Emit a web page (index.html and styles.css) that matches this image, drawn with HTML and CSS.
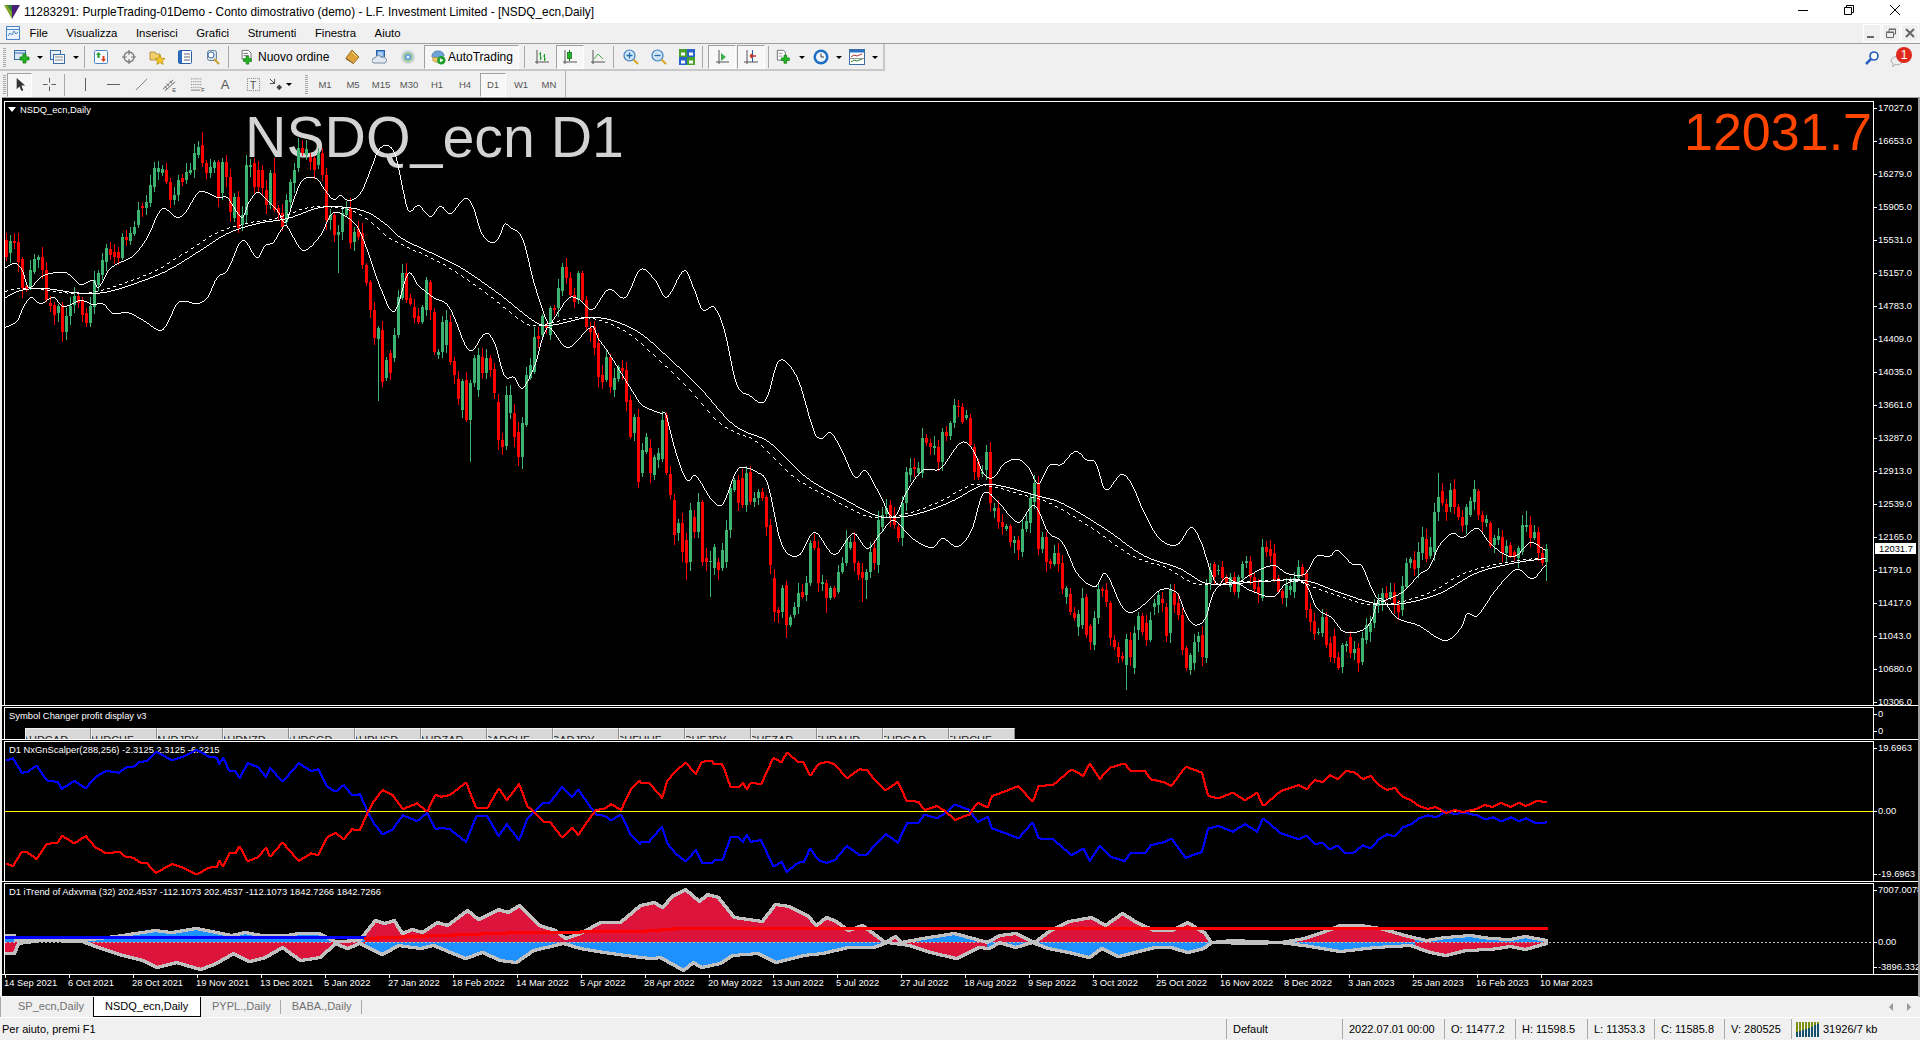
FILE: index.html
```html
<!DOCTYPE html>
<html lang="it">
<head>
  <meta charset="UTF-8" />
  <title>11283291: PurpleTrading-01Demo - Conto dimostrativo (demo) - L.F. Investment Limited - [NSDQ_ecn,Daily]</title>
  <link rel="stylesheet" href="styles.css">
</head>
<body>
  <div class="titlebar">
    <svg class="app-logo" viewBox="0 0 16 14"><polygon points="0,0 8,0 8,14" fill="#7fa52a"/><polygon points="8,0 16,0 8,14" fill="#4b1f78"/><polygon points="3,0 8,0 8,7" fill="#2f7d3a"/></svg>
    <span class="title-text">11283291: PurpleTrading-01Demo - Conto dimostrativo (demo) - L.F. Investment Limited - [NSDQ_ecn,Daily]</span>
    <div class="win-controls">
      <svg viewBox="0 0 46 23"><path d="M18 10.5h10" stroke="#000" fill="none"/></svg>
      <svg viewBox="0 0 46 23"><path d="M18.5 7.5h7v7h-7zM20.500 7.500v-2h7v7h-2" stroke="#000" fill="none"/></svg>
      <svg viewBox="0 0 46 23"><path d="M18 5l10 10M28 5L18 15" stroke="#000" fill="none"/></svg>
    </div>
  </div>

  <div class="menubar">
    <svg class="menu-icon" viewBox="0 0 16 16"><rect x="1.500" y="1.500" width="13" height="13" fill="#eaf2fb" stroke="#4a86c8"/><path d="M1.500 4.500h13" stroke="#4a86c8"/><path d="M3 11l2-3 2 2 2-4 2 3 2-2" fill="none" stroke="#4a86c8"/></svg>
    <span>File</span><span>Visualizza</span><span>Inserisci</span><span>Grafici</span><span>Strumenti</span><span>Finestra</span><span>Aiuto</span>
    <div class="mdi-controls">
      <div class="mdi-btn"><svg viewBox="0 0 16 16"><path d="M3 11h7v2H3z" fill="#666"/></svg></div>
      <div class="mdi-btn"><svg viewBox="0 0 16 16"><path d="M3.500 7.500h7v5h-7zM6 7V4.500h6.500V9H11" fill="none" stroke="#666"/><path d="M3 7h8M6 4h7" stroke="#666"/></svg></div>
      <div class="mdi-btn"><svg viewBox="0 0 16 16"><path d="M4 4l8 8M12 4l-8 8" stroke="#666" stroke-width="2"/></svg></div>
    </div>
  </div>

  <div class="toolbar tb-one">
    <div class="tb-panel">
      <div class="grip"></div>
      <div class="btn btn-drop"><svg class="ic" viewBox="0 0 18 16"><rect x="1.500" y="1.500" width="11" height="9" fill="#dbe8f6" stroke="#3a6ea5"/><path d="M1.500 4h11" stroke="#3a6ea5"/><path d="M10 5h3v3h3v3h-3v3h-3v-3H7V8h3z" fill="#23b523" stroke="#0c7c0c" stroke-width=".8"/></svg><i class="caret"></i></div>
      <div class="btn btn-drop"><svg class="ic" viewBox="0 0 18 16"><rect x="1.500" y="1.500" width="10" height="9" fill="#e6eef8" stroke="#3a6ea5"/><rect x="4.500" y="5.500" width="11" height="9" fill="#f4f8fc" stroke="#3a6ea5"/><path d="M6 8h8M6 11h8" stroke="#888"/></svg><i class="caret"></i></div>
      <div class="sep"></div>
      <div class="btn"><svg class="ic" viewBox="0 0 16 16"><rect x="1.500" y="1.500" width="13" height="13" rx="1" fill="#f6f9fd" stroke="#4a86c8"/><path d="M5.500 3l2.500 3H6.500v3h-2V6H3z" fill="#1f9e2c"/><path d="M10.500 13L8 10h1.500V7h2v3H13z" fill="#d9401f"/></svg></div>
      <div class="btn"><svg class="ic" viewBox="0 0 16 16"><circle cx="8" cy="8" r="5" fill="none" stroke="#777" stroke-width="1.300"/><path d="M8 1v5M8 10v5M1 8h5M10 8h5" stroke="#777" stroke-width="1.200"/></svg></div>
      <div class="btn"><svg class="ic" viewBox="0 0 16 16"><path d="M1 3h5l1 2h4v6H1z" fill="#f0cf6c" stroke="#a8862c" stroke-width=".8"/><path d="M11 6l1.500 3.200 3.500.4-2.600 2.300.8 3.500-3.200-1.800-3.200 1.800.8-3.500L6 9.600l3.500-.4z" fill="#f2c522" stroke="#b58a12" stroke-width=".7"/></svg></div>
      <div class="btn"><svg class="ic" viewBox="0 0 16 16"><rect x="1.500" y="1.500" width="13" height="13" rx="1" fill="#fff" stroke="#2a5fa8"/><rect x="2" y="2" width="3" height="12" fill="#2a6fc0"/><path d="M7 5h6M7 8h6M7 11h6" stroke="#667"/></svg></div>
      <div class="btn"><svg class="ic" viewBox="0 0 16 16"><rect x="2.500" y="1.500" width="9" height="10" rx="2" fill="#d6e1ec" stroke="#6c8198"/><circle cx="6" cy="6" r="3" fill="#fff" stroke="#3a6ea5"/><path d="M9 10l5 5" stroke="#c9a22a" stroke-width="2"/></svg></div>
      <div class="sep"></div>
      <div class="btn btn-text btn-order"><svg class="ic" viewBox="0 0 16 18"><path d="M2.500 1.500h7l3 3v7h-10z" fill="#fff" stroke="#666"/><path d="M4 5h5M4 7.500h6" stroke="#666"/><path d="M7 8h3v3h3v3h-3v3H7v-3H4v-3h3z" fill="#23b523" stroke="#0c7c0c" stroke-width=".8"/></svg><span>Nuovo ordine</span></div>
      <div class="btn"><svg class="ic" viewBox="0 0 16 16"><path d="M8 1l7 7-5.500 6.500L2 9z" fill="#e0a33a" stroke="#8a5f14" stroke-width=".8"/><path d="M2 9l7.500 5.500V15L1.500 10z" fill="#7a5212"/><path d="M8 3l4.500 4.500" stroke="#f7dd9a"/></svg></div>
      <div class="btn"><svg class="ic" viewBox="0 0 16 16"><rect x="4.500" y="1.500" width="8" height="8" fill="#5b9be0" stroke="#2a5fa8"/><path d="M6 4h5M6 6h5" stroke="#fff"/><path d="M2 14a2.500 2.500 0 0 1 1-5 3.500 3.500 0 0 1 6.500-.5A3 3 0 0 1 13 14z" fill="#dfe7f0" stroke="#7a8ca0"/></svg></div>
      <div class="btn"><svg class="ic" viewBox="0 0 16 16"><circle cx="8" cy="8" r="7" fill="#cdd9df"/><circle cx="8" cy="8" r="5" fill="#9fc69a"/><circle cx="8" cy="8" r="3" fill="#5b9be0"/><circle cx="8" cy="8" r="1.500" fill="#e8f0f8"/></svg></div>
      <div class="btn btn-text btn-auto"><svg class="ic" viewBox="0 0 17 17"><path d="M2 8c0-4 3-6 7-6 3 0 6 2 6 5l-2 2H3z" fill="#6fa3d8" stroke="#3a6ea5" stroke-width=".7"/><path d="M3 9h10v3c-2 3-8 3-10 0z" fill="#f2c96a" stroke="#a8862c" stroke-width=".7"/><circle cx="12" cy="12" r="4.500" fill="#1f9e2c"/><path d="M10.500 9.800l4 2.200-4 2.200z" fill="#fff"/></svg><span>AutoTrading</span></div>
      <div class="sep sep-wide"></div>
      <div class="btn"><svg class="ic" viewBox="0 0 16 16"><path d="M3 1v14M1 13h14" stroke="#555"/><path d="M6.500 3v8M5 5h1.500M6.500 9H8M10.500 5v7M9 7h1.500M10.500 10H12" stroke="#1f9e2c"/></svg></div>
      <div class="btn btn-on"><svg class="ic" viewBox="0 0 16 16"><path d="M3 1v14M1 13h14" stroke="#555"/><path d="M7.500 1v11" stroke="#156f20"/><rect x="5.500" y="3.500" width="4" height="6" fill="#23b523" stroke="#156f20" stroke-width=".8"/></svg></div>
      <div class="btn"><svg class="ic" viewBox="0 0 16 16"><path d="M3 1v14M1 13h14" stroke="#555"/><path d="M4 10l4-5 5 5" fill="none" stroke="#3fae4a"/></svg></div>
      <div class="sep sep-zoom"></div>
      <div class="btn"><svg class="ic" viewBox="0 0 16 16"><circle cx="6.500" cy="6.500" r="5.500" fill="#cfe4f7" stroke="#3a7dc0" stroke-width="1.200"/><path d="M6.500 3.500v6M3.500 6.500h6" stroke="#2a6fb0" stroke-width="1.300"/><path d="M10.500 10.500l4.500 4.500" stroke="#d6a92c" stroke-width="2.200"/></svg></div>
      <div class="btn"><svg class="ic" viewBox="0 0 16 16"><circle cx="6.500" cy="6.500" r="5.500" fill="#cfe4f7" stroke="#3a7dc0" stroke-width="1.200"/><path d="M3.500 6.500h6" stroke="#2a6fb0" stroke-width="1.300"/><path d="M10.500 10.500l4.500 4.500" stroke="#d6a92c" stroke-width="2.200"/></svg></div>
      <div class="btn"><svg class="ic" viewBox="0 0 16 16"><rect x="0" y="0" width="8" height="8" fill="#4aa02c"/><rect x="8" y="0" width="8" height="8" fill="#2a62c8"/><rect x="0" y="8" width="8" height="8" fill="#2a62c8"/><rect x="8" y="8" width="8" height="8" fill="#4aa02c"/><path d="M2 3.500h4v3H2zM10 3.500h4v3h-4zM2 11.500h4v3H2zM10 11.500h4v3h-4z" fill="#fff"/></svg></div>
      <div class="sep sep-scroll"></div>
      <div class="btn btn-on"><svg class="ic" viewBox="0 0 16 16"><path d="M5 1v14M2 13h13" stroke="#555"/><path d="M7 4l5 4-5 4z" fill="#3fae4a"/></svg></div>
      <div class="btn btn-on btn-shift"><svg class="ic" viewBox="0 0 16 16"><path d="M4 1v14M1 13h14" stroke="#555"/><path d="M9.500 1v12" stroke="#2a5fa8"/><path d="M7 7h6M7 7l2-2M7 7l2 2" stroke="#c8321f" stroke-width="1.300"/></svg></div>
      <div class="sep sep-ind"></div>
      <div class="btn btn-drop"><svg class="ic" viewBox="0 0 18 18"><path d="M1.500 1.500h7l2 2v9h-9z" fill="#fff" stroke="#666"/><path d="M3 5h4M3 8h4" stroke="#888"/><path d="M9 7h3v3h3v3h-3v3H9v-3H6v-3h3z" fill="#23b523" stroke="#0c7c0c" stroke-width=".8"/></svg><i class="caret"></i></div>
      <div class="btn btn-drop btn-clock"><svg class="ic" viewBox="0 0 16 16"><circle cx="8" cy="8" r="7.500" fill="#1a6fc4"/><circle cx="8" cy="8" r="5" fill="#eef3f8"/><path d="M8 4.500V8h3" fill="none" stroke="#444"/></svg><i class="caret"></i></div>
      <div class="btn btn-drop"><svg class="ic" viewBox="0 0 16 16"><rect x=".5" y=".5" width="15" height="15" fill="#fff" stroke="#3a6ea5"/><rect x="1" y="1" width="14" height="2.500" fill="#2a6fc0"/><path d="M2 8l3-2 3 1 5-2" fill="none" stroke="#a33"/><path d="M1 9.500h14" stroke="#999"/><path d="M2 13l3-2 3 1 5-2" fill="none" stroke="#2a8a2a"/></svg><i class="caret"></i></div>
    </div>
    <div class="tb-right">
      <svg class="ic" viewBox="0 0 16 16"><circle cx="10" cy="6" r="4" fill="#fff" stroke="#2a5fc0" stroke-width="1.700"/><path d="M7 9l-5 5" stroke="#2a5fc0" stroke-width="2.500"/></svg>
      <div class="notify">
        <svg class="ic" viewBox="0 0 16 16"><path d="M1 9a6 4.500 0 0 1 12 0 6 4.500 0 0 1-8 3.500L3 15v-3.500A4 4 0 0 1 1 9z" fill="#eee" stroke="#aaa"/></svg>
        <b class="badge">1</b>
      </div>
    </div>
  </div>

  <div class="toolbar tb-two">
    <div class="tb-panel tb-panel-two">
      <div class="grip"></div>
      <div class="btn2 btn-on"><svg class="ic" viewBox="0 0 16 16"><path d="M5 1v12l3-3 2 5 2-1-2-5h4z" fill="#333"/></svg></div>
      <div class="btn2"><svg class="ic" viewBox="0 0 16 16"><path d="M8 1v5M8 10v5M1 8h5M10 8h5" stroke="#555"/></svg></div>
      <div class="sep sep-draw"></div>
      <div class="btn2 w-draw"><svg class="ic" viewBox="0 0 16 16"><path d="M8 1v14" stroke="#555"/></svg></div>
      <div class="btn2 w-draw"><svg class="ic" viewBox="0 0 16 16"><path d="M1 8h14" stroke="#555"/></svg></div>
      <div class="btn2 w-draw"><svg class="ic" viewBox="0 0 16 16"><path d="M2 14L14 2" stroke="#777"/></svg></div>
      <div class="btn2 w-draw"><svg class="ic" viewBox="0 0 16 16"><path d="M1 13L12 3M3 15L14 5M5 7l3 3M8 4l3 3M3 10l3 3" stroke="#666"/><text x="11" y="16" class="ic-letter">E</text></svg></div>
      <div class="btn2 w-draw"><svg class="ic" viewBox="0 0 16 16"><path d="M1 2h11M1 5h11M1 8h11M1 11h11" stroke="#777" stroke-dasharray="1 1"/><path d="M1 14h10" stroke="#777"/><text x="12" y="16" class="ic-letter">F</text></svg></div>
      <div class="btn2 w-draw"><span class="tool-a">A</span></div>
      <div class="btn2 w-draw"><svg class="ic" viewBox="0 0 16 16"><rect x="1.500" y="1.500" width="13" height="13" fill="none" stroke="#777" stroke-dasharray="1 1"/></svg><span class="tool-t">T</span></div>
      <div class="btn2 btn-arrows"><svg class="ic" viewBox="0 0 16 16"><path d="M2 2l5 5M7 2v5H2" stroke="#444" fill="none"/><path d="M9 11l3-3 3 3-3 3z" fill="#444"/></svg><i class="caret"></i></div>
      <div class="grip grip-inner"></div>
      <div class="period">M1</div><div class="period">M5</div><div class="period">M15</div><div class="period">M30</div><div class="period">H1</div><div class="period">H4</div><div class="period period-on">D1</div><div class="period">W1</div><div class="period">MN</div>
    </div>
  </div>

  <div class="charts">
    <div class="pane pane-main">
      <div class="plot">
        <div class="chart-name"><i class="name-caret"></i>NSDQ_ecn,Daily</div>
        <div class="big-symbol">NSDQ_ecn D1</div>
        <div class="big-price">12031.7</div>
        <canvas id="mainChart"></canvas>
      </div>
      <div class="axis axis-main">
        <div class="tick">17027.0</div><div class="tick">16653.0</div><div class="tick">16279.0</div><div class="tick">15905.0</div><div class="tick">15531.0</div><div class="tick">15157.0</div><div class="tick">14783.0</div><div class="tick">14409.0</div><div class="tick">14035.0</div><div class="tick">13661.0</div><div class="tick">13287.0</div><div class="tick">12913.0</div><div class="tick">12539.0</div><div class="tick">12165.0</div><div class="tick">11791.0</div><div class="tick">11417.0</div><div class="tick">11043.0</div><div class="tick">10680.0</div><div class="tick">10306.0</div>
        <div class="price-tag">12031.7</div>
      </div>
    </div>

    <div class="pane pane-sym">
      <div class="plot">
        <div class="pane-label">Symbol Changer profit display v3</div>
        <div class="sym-row">
          <div class="sym"><span>AUDCAD --- ...</span></div><div class="sym"><span>AUDCHF --- ...</span></div><div class="sym"><span>AUDJPY --- ...</span></div><div class="sym"><span>AUDNZD --- ...</span></div><div class="sym"><span>AUDSGD --- ...</span></div><div class="sym"><span>AUDUSD --- ...</span></div><div class="sym"><span>AUDZAR --- ...</span></div><div class="sym"><span>CADCHF --- ...</span></div><div class="sym"><span>CADJPY --- ...</span></div><div class="sym"><span>CHFHUF --- ...</span></div><div class="sym"><span>CHFJPY --- ...</span></div><div class="sym"><span>CHFZAR --- ...</span></div><div class="sym"><span>EURAUD --- ...</span></div><div class="sym"><span>EURCAD --- ...</span></div><div class="sym"><span>EURCHF --- ...</span></div>
        </div>
      </div>
      <div class="axis axis-sym"><div class="tick">0</div><div class="tick">0</div></div>
    </div>

    <div class="pane pane-nx">
      <div class="plot">
        <div class="pane-label">D1 NxGnScalper(288,256) -2.3125 2.3125 -6.2215</div>
        <canvas id="scalperChart"></canvas>
      </div>
      <div class="axis axis-nx"><div class="tick">19.6963</div><div class="tick">0.00</div><div class="tick">-19.6963</div></div>
    </div>

    <div class="pane pane-trend">
      <div class="plot">
        <div class="pane-label">D1 iTrend of Adxvma (32) 202.4537 -112.1073 202.4537 -112.1073 1842.7266 1842.7266</div>
        <canvas id="trendChart"></canvas>
      </div>
      <div class="axis axis-trend"><div class="tick">7007.0078</div><div class="tick">0.00</div><div class="tick">-3896.332</div></div>
    </div>

    <div class="time-axis">
      <div class="date">14 Sep 2021</div><div class="date">6 Oct 2021</div><div class="date">28 Oct 2021</div><div class="date">19 Nov 2021</div><div class="date">13 Dec 2021</div><div class="date">5 Jan 2022</div><div class="date">27 Jan 2022</div><div class="date">18 Feb 2022</div><div class="date">14 Mar 2022</div><div class="date">5 Apr 2022</div><div class="date">28 Apr 2022</div><div class="date">20 May 2022</div><div class="date">13 Jun 2022</div><div class="date">5 Jul 2022</div><div class="date">27 Jul 2022</div><div class="date">18 Aug 2022</div><div class="date">9 Sep 2022</div><div class="date">3 Oct 2022</div><div class="date">25 Oct 2022</div><div class="date">16 Nov 2022</div><div class="date">8 Dec 2022</div><div class="date">3 Jan 2023</div><div class="date">25 Jan 2023</div><div class="date">16 Feb 2023</div><div class="date">10 Mar 2023</div>
    </div>
  </div>

  <div class="tabs">
    <div class="tab tab-first">SP_ecn,Daily</div>
    <div class="tab tab-active">NSDQ_ecn,Daily</div>
    <div class="tab">PYPL.,Daily</div>
    <div class="tab">BABA.,Daily</div>
    <div class="tab-arrows"><i class="arrow-left"></i><i class="arrow-right"></i></div>
  </div>

  <div class="status">
    <div class="cell cell-help">Per aiuto, premi F1</div>
    <div class="cell cell-profile">Default</div>
    <div class="cell cell-date">2022.07.01 00:00</div>
    <div class="cell cell-o">O: 11477.2</div>
    <div class="cell cell-h">H: 11598.5</div>
    <div class="cell cell-l">L: 11353.3</div>
    <div class="cell cell-c">C: 11585.8</div>
    <div class="cell cell-v">V: 280525</div>
    <div class="cell cell-mem">
      <svg class="mem-bars" viewBox="0 0 24 16"><path d="M1 16V1M4 16V1M7 16V1M10 16V1M13 16V1M16 16V1M19 16V1M22 16V1" stroke="#7f8f12" stroke-width="2"/><path d="M1 16v-5M4 16v-6M7 16v-7M10 16v-8M13 16v-9M16 16v-10M19 16v-12M22 16v-13" stroke="#15506e" stroke-width="2"/></svg>
      <span>31926/7 kb</span>
    </div>
  </div>

  <script src="chart.js"></script>
</body>
</html>
```

FILE: styles.css
```css
* { box-sizing: border-box; }
html, body { margin: 0; padding: 0; }
body {
  width: 1920px;
  height: 1040px;
  overflow: hidden;
  background: #f0f0f0;
  color: #000;
  font-family: "Liberation Sans", Arial, sans-serif;
  font-size: 11px;
}

/* window chrome */
.titlebar {
  height: 23px;
  background: #fff;
  display: flex;
  align-items: center;
  position: relative;
}
.app-logo { width: 16px; height: 14px; margin-left: 4px; }
.title-text { margin-left: 4px; font-size: 11.850px; white-space: nowrap; }
.win-controls { margin-left: auto; display: flex; margin-right: 2px; }
.win-controls svg { width: 46px; height: 23px; }

.menubar {
  height: 21px;
  border-bottom: 1px solid #a0a0a0;
  display: flex;
  align-items: center;
  gap: 18.500px;
  padding-left: 5px;
  font-size: 11.400px;
}
.menu-icon { width: 16px; height: 16px; margin-right: -10px; }
.mdi-controls { margin-left: auto; display: flex; gap: 1px; margin-right: 1px; }
.mdi-btn {
  width: 18px;
  height: 18px;
  border: 1px solid #fff;
}
.mdi-btn svg { width: 16px; height: 16px; display: block; }

/* toolbars */
.toolbar { display: flex; align-items: stretch; }
.tb-one { height: 27px; }
.tb-two { height: 26px; }
.tb-panel {
  display: flex;
  align-items: center;
  width: 885px;
  padding: 1px 0 0 2px;
  border-right: 2px solid #c8c8c8;
  border-bottom: 2px solid #c8c8c8;
}
.tb-panel-two { width: 566px; border-right: 1px solid #b0b0b0; border-bottom: 0; }
.grip {
  width: 3px;
  height: 19px;
  margin: 0 5px 0 1px;
  background: repeating-linear-gradient(#a8a8a8 0 1px, #f0f0f0 1px 2px);
}
.tb-panel-two > .grip:first-child { margin-right: 1px; }
.grip-inner { margin: 0 3px 0 12px; }
.ic { width: 16px; height: 16px; display: block; flex: none; }
.btn, .btn2 {
  width: 28px;
  height: 24px;
  display: flex;
  align-items: center;
  justify-content: center;
  flex: none;
  position: relative;
}
.btn-drop { width: 36px; justify-content: flex-start; padding-left: 2px; }
.btn-drop .ic { width: 18px; }
.btn-clock { margin-left: 1px; }
.btn-shift { margin-left: 1px; }
.caret {
  margin-left: 6px;
  width: 0;
  height: 0;
  border-left: 3px solid transparent;
  border-right: 3px solid transparent;
  border-top: 3px solid #000;
}
.btn-on {
  border: 1px solid;
  border-color: #a0a0a0 #fff #fff #a0a0a0;
  background: #f7f7f7;
}
.sep { width: 4px; height: 22px; flex: none; position: relative; }
.sep::before {
  content: "";
  position: absolute;
  left: 1px;
  top: 0;
  bottom: 0;
  width: 1px;
  background: #a8a8a8;
}
.sep-wide { width: 9px; }
.sep-wide::before { left: 5px; }
.sep-zoom { width: 5px; }
.sep-scroll { width: 7px; }
.sep-ind { width: 8px; }
.sep-ind::before { left: 3px; }
.sep-draw { width: 8px; }
.btn-text { width: auto; font-size: 12px; }
.btn-order { width: 107px; justify-content: flex-start; padding-left: 8px; }
.btn-order span { margin-left: 3px; }
.btn-auto {
  width: 95px;
  justify-content: flex-start;
  padding-left: 5px;
  margin-left: 2px;
  border: 1px solid;
  border-color: #a0a0a0 #fff #fff #a0a0a0;
  background: #f7f7f7;
}
.btn-auto span { margin-left: 2px; }
.tb-right {
  margin-left: auto;
  display: flex;
  align-items: center;
  gap: 10px;
  padding-right: 10px;
}
.notify { position: relative; width: 20px; height: 20px; display: flex; align-items: flex-end; }
.badge {
  position: absolute;
  right: -2px;
  top: -1px;
  width: 16px;
  height: 16px;
  border-radius: 50%;
  background: #e0281c;
  color: #fff;
  font-weight: normal;
  font-size: 12px;
  line-height: 16px;
  text-align: center;
}
.btn2 { height: 24px; }
.btn-on.btn2 { width: 25px; margin-right: 3px; }
.w-draw { width: 28px; }
.btn2 .ic { width: 15px; height: 15px; }
.btn-arrows { width: 26px; }
.btn-arrows .caret { margin-left: 3px; }
.ic-letter { font-size: 6px; fill: #444; font-family: "Liberation Sans", sans-serif; }
.tool-a { font-size: 13px; color: #555; }
.tool-t { position: absolute; font-size: 11px; color: #555; }
.period {
  width: 28px;
  height: 24px;
  line-height: 24px;
  text-align: center;
  font-size: 9.500px;
  color: #555;
  flex: none;
}
.period-on {
  width: 26px;
  margin: 0 1px;
  line-height: 22px;
  border: 1px solid;
  border-color: #a0a0a0 #fff #fff #a0a0a0;
  background: #f7f7f7;
}

/* chart windows */
.charts {
  margin-left: 2px;
  background: #000;
  border-top: 1px solid #a0a0a0;
  border-right: 2px solid #a0a0a0;
  padding-top: 3px;
  color: #fff;
  font-size: 9.400px;
}
.pane {
  display: flex;
  border-bottom: 1px solid #fff;
  margin-bottom: 1px;
}
.pane-main { height: 605px; }
.pane-sym { height: 33px; }
.pane-nx { height: 141px; }
.pane-trend { height: 92px; margin-bottom: 0; }
.plot {
  flex: none;
  width: 1870px;
  margin-left: 2px;
  border: 1px solid #fff;
  border-bottom: 0;
  position: relative;
  overflow: hidden;
}
.plot canvas { position: absolute; left: 0; top: 0; }
.chart-name { position: absolute; left: 15px; top: 2px; line-height: 11px; white-space: nowrap; }
.name-caret {
  position: absolute;
  left: -12px;
  top: 3px;
  border-left: 4px solid transparent;
  border-right: 4px solid transparent;
  border-top: 5px solid #fff;
}
.big-symbol {
  position: absolute;
  left: 240px;
  top: 7px;
  font-size: 57.300px;
  line-height: 56px;
  color: #d3d3d3;
  white-space: nowrap;
}
.big-price {
  position: absolute;
  right: 1px;
  top: 3px;
  font-size: 52px;
  line-height: 54px;
  color: #ff4500;
  white-space: nowrap;
}
.pane-label { position: absolute; left: 4px; top: 2px; line-height: 11px; white-space: nowrap; }
.sym-row { position: absolute; left: 20px; top: 20px; display: flex; }
.sym {
  width: 66px;
  height: 20px;
  background: #d8d8d8;
  border: 1px solid #f0f0f0;
  border-right-color: #888;
  color: #222;
  font-size: 11px;
  line-height: 14px;
  padding-top: 4px;
  display: flex;
  justify-content: center;
  overflow: hidden;
  white-space: nowrap;
}
.sym span { flex: none; }

.axis { flex: none; width: 44px; position: relative; overflow: hidden; display: flex; flex-direction: column; }
.tick {
  flex: none;
  height: 11px;
  line-height: 11px;
  padding-left: 4px;
  position: relative;
  white-space: nowrap;
}
.tick::before {
  content: "";
  position: absolute;
  left: 0;
  top: 6px;
  width: 3px;
  height: 1px;
  background: #fff;
}
.axis-main { padding-top: 1px; gap: 22.020px; overflow: visible; }
.axis-sym { padding-top: 1px; gap: 6px; }
.axis-nx { padding-top: 1px; gap: 52px; }
.axis-trend { padding-top: 1px; }
.axis-trend .tick:nth-child(2) { margin-top: 41px; }
.axis-trend .tick:nth-child(3) { margin-top: 14px; }
.price-tag {
  position: absolute;
  left: 1px;
  top: 442px;
  width: 41px;
  height: 11px;
  line-height: 11px;
  background: #fff;
  color: #000;
  padding-left: 4px;
}

.time-axis {
  display: flex;
  height: 22px;
  padding-left: 2px;
  border-bottom: 1px solid #fff;
  overflow: hidden;
}
.date {
  flex: none;
  width: 64px;
  position: relative;
  padding-top: 2px;
  line-height: 11px;
  white-space: nowrap;
}
.date::before {
  content: "";
  position: absolute;
  left: 1px;
  top: 0;
  width: 1px;
  height: 3px;
  background: #fff;
}

/* tabs and status */
.tabs {
  height: 20px;
  display: flex;
  align-items: stretch;
  font-size: 11px;
  color: #707070;
  line-height: 19px;
}
.tab { padding: 0 10px 0 11px; position: relative; }
.tab::after {
  content: "";
  position: absolute;
  right: 0;
  top: 3px;
  bottom: 3px;
  width: 1px;
  background: #a8a8a8;
}
.tab-first { width: 93px; padding-left: 17px; border-left: 1px solid #a8a8a8; }
.tab-first::after { display: none; }
.tab-active {
  width: 108px;
  background: #fff;
  color: #000;
  border: 1px solid #000;
  border-top: 0;
}
.tab-active::after { display: none; }
.tab-arrows { margin-left: auto; display: flex; gap: 14px; align-items: center; padding-right: 9px; }
.arrow-left, .arrow-right {
  width: 0;
  height: 0;
  border-top: 4px solid transparent;
  border-bottom: 4px solid transparent;
}
.arrow-left { border-right: 4px solid #999; }
.arrow-right { border-left: 4px solid #999; }

.status {
  height: 23px;
  border-top: 1px solid #fff;
  display: flex;
  align-items: center;
  font-size: 11px;
}
.cell { height: 20px; line-height: 20px; padding-left: 6px; border-left: 1px solid #a8a8a8; white-space: nowrap; flex: none; }
.cell-help { width: 1226px; border-left: 0; padding-left: 2px; }
.cell-profile { width: 116px; }
.cell-date { width: 102px; }
.cell-o { width: 71px; }
.cell-h { width: 72px; }
.cell-l { width: 67px; }
.cell-c { width: 70px; }
.cell-v { width: 67px; }
.cell-mem { width: 129px; display: flex; align-items: center; gap: 3px; padding-left: 4px; }
.mem-bars { width: 24px; height: 16px; }
```

FILE: chart.js
```js
// screen coordinates are used throughout, each canvas is shifted to its own spot
function setup(id) {
  const c = document.getElementById(id);
  const box = c.parentElement;
  c.width = box.clientWidth;
  c.height = box.clientHeight;
  const r = c.getBoundingClientRect();
  const ctx = c.getContext('2d');
  ctx.translate(-Math.round(r.left), -Math.round(r.top));
  return ctx;
}

// aliased line, the terminal does not smooth its lines
function line(ctx, x0, y0, x1, y1, w) {
  x0 = Math.round(x0); y0 = Math.round(y0); x1 = Math.round(x1); y1 = Math.round(y1);
  const dx = Math.abs(x1 - x0), dy = Math.abs(y1 - y0);
  const sx = x0 < x1 ? 1 : -1, sy = y0 < y1 ? 1 : -1;
  let err = dx - dy;
  const off = Math.floor((w - 1) / 2);
  while (true) {
    ctx.fillRect(x0 - off, y0 - off, w, w);
    if (x0 === x1 && y0 === y1) break;
    const e2 = 2 * err;
    if (e2 > -dy) { err -= dy; x0 += sx; }
    if (e2 < dx) { err += dx; y0 += sy; }
  }
}

function lerpAt(keys, x) {
  if (x <= keys[0][0]) return keys[0][1];
  for (let k = 1; k < keys.length; k++) {
    if (x <= keys[k][0]) {
      const t = (x - keys[k - 1][0]) / (keys[k][0] - keys[k - 1][0]);
      return keys[k - 1][1] + t * (keys[k][1] - keys[k - 1][1]);
    }
  }
  return keys[keys.length - 1][1];
}

// cubic through the keys, for the smooth band lines
function smoothAt(keys, x) {
  const n = keys.length;
  if (x <= keys[0][0]) return keys[0][1];
  if (x >= keys[n - 1][0]) return keys[n - 1][1];
  let k = 1;
  while (keys[k][0] < x) k++;
  const a = keys[k - 1], b = keys[k];
  const h = b[0] - a[0], t = (x - a[0]) / h;
  const p = keys[Math.max(k - 2, 0)], q = keys[Math.min(k + 1, n - 1)];
  const ma = (b[1] - p[1]) / (b[0] - p[0]) * h;
  const mb = (q[1] - a[1]) / (q[0] - a[0]) * h;
  const t2 = t * t, t3 = t2 * t;
  return (2 * t3 - 3 * t2 + 1) * a[1] + (t3 - 2 * t2 + t) * ma + (-2 * t3 + 3 * t2) * b[1] + (t3 - t2) * mb;
}

function polyline(ctx, keys, at, w) {
  let px = keys[0][0], py = keys[0][1];
  for (let x = px + 1; x <= keys[keys.length - 1][0]; x++) {
    const y = at(keys, x);
    line(ctx, px, py, x, y, w);
    px = x; py = y;
  }
}

let seed = 7;
function rnd() {
  seed = (seed * 1103515245 + 12345) & 0x7fffffff;
  return seed / 0x7fffffff;
}

// bodies read off the chart: x, top, bottom, 1 for green
const bodies = [
[5,240,257,0],[9,241,253,1],[13,241,243,0],[18,242,262,0],[21,259,288,0],[25,286,289,0],[29,270,288,1],[33,259,272,1],[38,257,260,1],[41,257,270,0],[45,270,300,0],[49,303,306,0],[53,305,315,0],[57,306,313,1],[61,305,332,0],[65,316,332,1],[69,306,316,1],[73,296,305,1],[78,296,303,0],[82,300,315,0],[86,313,323,0],[90,306,323,1],[94,280,307,1],[97,273,285,1],[101,260,275,1],[105,248,262,1],[109,249,255,0],[113,252,257,0],[117,252,258,0],[121,237,258,1],[125,237,240,0],[129,233,241,1],[133,227,234,1],[137,210,225,1],[141,206,208,0],[145,202,208,1],[149,185,203,1],[153,168,187,1],[157,168,172,1],[161,169,173,1],[165,170,182,0],[169,182,200,0],[173,195,200,1],[177,180,195,1],[181,178,182,0],[185,172,180,1],[189,170,173,1],[193,153,170,1],[197,147,155,1],[201,145,163,0],[205,163,173,0],[209,167,173,1],[213,162,168,1],[217,162,197,0],[221,162,193,1],[225,162,177,0],[229,177,212,0],[233,197,218,1],[237,197,228,0],[241,215,225,1],[245,165,215,1],[249,165,167,1],[253,163,187,0],[257,170,187,0],[261,170,188,0],[265,190,205,0],[269,173,205,1],[273,173,210,0],[277,208,213,0],[281,213,227,0],[285,200,222,1],[289,182,202,1],[293,170,183,1],[297,148,168,1],[301,148,153,0],[305,149,155,1],[309,157,162,0],[313,158,170,0],[317,153,165,1],[321,153,175,0],[325,175,220,0],[329,215,220,1],[333,215,235,0],[337,232,235,1],[341,213,232,1],[345,208,215,1],[349,208,243,0],[353,232,242,1],[357,229,237,0],[361,233,265,0],[365,265,283,0],[369,282,310,0],[373,310,338,0],[377,328,339,1],[381,330,382,0],[385,360,378,1],[389,353,373,0],[393,335,358,1],[397,297,335,1],[401,273,298,1],[405,273,300,0],[409,298,304,0],[413,307,318,0],[417,316,322,0],[421,307,322,1],[425,280,310,1],[429,282,310,0],[433,312,352,0],[437,352,355,1],[441,322,352,1],[445,320,345,1],[449,322,362,0],[453,361,375,0],[457,379,399,0],[461,381,410,1],[465,380,420,0],[469,383,420,1],[473,358,383,1],[477,355,390,1],[481,357,373,0],[486,358,373,1],[490,358,370,0],[494,369,393,0],[498,402,440,0],[501,440,447,0],[505,395,446,1],[509,395,413,1],[513,413,437,0],[518,432,457,0],[522,423,457,1],[525,375,425,1],[529,365,378,1],[533,337,372,1],[538,336,339,0],[542,316,335,1],[546,325,328,0],[550,308,335,1],[554,308,310,0],[558,288,308,1],[561,267,291,1],[565,267,278,0],[569,278,295,0],[573,295,302,0],[578,273,300,1],[581,273,300,0],[585,300,327,0],[589,328,332,0],[593,327,348,0],[598,343,377,0],[601,375,382,0],[605,357,380,1],[609,357,387,0],[614,378,390,1],[618,367,379,1],[622,368,371,0],[625,370,402,0],[629,400,437,0],[633,417,433,1],[638,417,482,0],[642,450,473,1],[646,437,452,1],[650,448,473,0],[654,457,475,1],[658,453,460,1],[661,420,459,1],[666,415,473,0],[669,474,495,0],[673,500,535,0],[678,523,533,1],[682,523,552,0],[686,540,563,0],[689,510,562,1],[693,517,532,0],[698,502,532,1],[702,502,562,0],[706,558,562,0],[710,561,562,1],[714,547,568,1],[718,562,570,0],[722,550,568,1],[726,530,562,1],[730,488,530,1],[733,480,490,1],[738,480,503,0],[741,478,505,0],[746,473,505,1],[750,472,502,0],[754,498,502,1],[758,492,498,1],[762,492,498,0],[766,497,527,0],[770,525,565,0],[774,578,612,0],[778,610,613,0],[781,588,612,1],[786,585,625,0],[789,617,625,1],[793,607,615,1],[798,593,607,1],[802,592,597,0],[806,583,595,1],[810,543,583,1],[814,541,548,0],[818,548,583,0],[822,582,584,1],[826,583,598,0],[829,588,598,1],[833,588,597,0],[838,572,592,1],[842,563,572,1],[846,540,563,1],[850,542,548,1],[853,542,563,0],[858,563,575,0],[862,572,578,0],[866,572,580,1],[870,552,572,1],[873,548,563,0],[877,520,565,1],[881,515,527,1],[885,508,514,1],[889,505,517,0],[893,517,525,0],[898,527,538,0],[902,503,538,1],[906,472,503,1],[910,468,475,1],[914,467,469,0],[918,468,473,1],[922,438,473,1],[926,438,443,0],[930,443,447,0],[934,446,448,1],[937,447,462,0],[942,432,462,1],[945,432,436,0],[949,423,436,1],[953,405,423,1],[957,406,407,0],[961,407,422,0],[965,415,418,1],[969,418,445,0],[973,447,472,0],[977,462,477,0],[981,472,474,1],[985,452,470,1],[989,452,503,0],[993,508,511,1],[998,508,522,0],[1002,522,527,0],
[1006,526,529,1],[1010,526,542,0],[1014,540,543,1],[1018,540,550,0],[1022,529,552,1],[1026,521,529,1],[1030,498,523,1],[1034,483,502,1],[1038,483,549,0],[1042,537,549,1],[1046,537,562,0],[1050,561,564,0],[1054,553,564,1],[1058,553,564,0],[1062,563,589,0],[1066,588,597,1],[1070,594,612,0],[1074,613,618,0],[1078,614,627,1],[1082,598,625,1],[1086,597,635,0],[1090,626,642,0],[1094,618,645,1],[1098,589,618,1],[1102,589,591,0],[1106,590,602,0],[1110,603,638,0],[1114,640,647,0],[1118,647,657,0],[1122,656,659,0],[1126,639,665,1],[1130,640,657,0],[1134,633,668,1],[1138,616,630,1],[1142,616,632,0],[1146,623,640,0],[1150,620,640,1],[1154,603,607,1],[1158,595,605,1],[1162,599,603,0],[1166,607,636,0],[1170,589,633,1],[1174,593,605,0],[1178,603,615,0],[1182,615,650,0],[1186,648,668,0],[1190,655,670,1],[1194,642,663,1],[1198,636,642,1],[1202,635,657,0],[1206,583,658,1],[1210,570,583,1],[1214,564,577,0],[1218,570,571,1],[1222,567,578,0],[1226,578,583,0],[1230,577,587,1],[1234,577,592,0],[1238,577,592,1],[1242,564,578,1],[1246,561,563,1],[1250,561,577,0],[1254,577,589,0],[1258,587,593,0],[1262,547,598,1],[1266,547,552,0],[1270,549,556,0],[1274,553,580,0],[1278,578,592,0],[1282,591,598,0],[1286,585,598,1],[1290,586,590,1],[1294,578,592,1],[1298,567,578,1],[1302,567,575,0],[1306,573,610,0],[1310,609,622,0],[1314,621,634,0],[1318,632,633,1],[1322,617,633,1],[1326,617,645,0],[1330,643,657,0],[1334,636,658,0],[1338,657,668,0],[1342,645,667,1],[1346,644,646,1],[1350,637,653,0],[1354,649,653,1],[1358,648,663,0],[1362,638,662,1],[1366,625,640,1],[1370,623,632,1],[1374,605,623,1],[1378,601,606,1],[1382,593,605,1],[1386,593,598,0],[1390,592,598,1],[1394,592,605,0],[1398,605,612,0],[1402,586,610,1],[1406,563,587,1],[1410,559,563,1],[1414,560,569,0],[1418,552,568,1],[1422,537,553,1],[1426,539,559,0],[1430,547,556,1],[1434,512,552,1],[1438,497,512,1],[1442,491,503,0],[1446,504,512,0],[1450,490,507,1],[1454,489,507,0],[1458,507,517,0],[1462,517,526,0],[1466,507,525,1],[1470,501,515,1],[1474,489,502,1],[1478,491,515,0],[1482,515,522,0],[1486,519,523,1],[1490,523,546,0],[1494,538,545,1],[1498,536,540,1],[1502,537,553,0],[1506,546,553,1],[1510,545,556,0],[1514,552,557,0],[1518,548,558,1],[1522,525,552,1],[1526,525,527,1],[1530,525,538,0],[1534,532,538,1],[1538,532,553,0],[1542,553,563,0],[1546,549,562,1]
];

// the few wicks that stand out: x, high, low
const longWicks = [[62,0,342],[202,132,0],[273,158,0],[302,140,0],[322,148,0],[337,0,273],[378,0,401],[469,0,462],[522,0,469],[561,263,0],[685,0,580],[710,0,597],[785,0,638],[825,0,613],[862,0,602],[865,0,599],[957,400,0],[1093,0,650],[1125,0,690],[1296,534,0],[1437,473,0],[1525,511,0],[1546,544,581]];

const upper = [[5,267],[15,263],[22,270],[28,287],[40,277],[50,273],[65,272],[73,278],[80,284],[93,280],[98,287],[110,268],[133,255],[147,237],[157,215],[163,208],[170,212],[177,217],[185,212],[197,193],[203,191],[217,197],[227,197],[233,206],[242,217],[248,203],[257,192],[267,200],[277,210],[285,222],[293,200],[300,183],[307,177],[317,179],[325,190],[333,199],[340,195],[348,200],[360,193],[370,170],[378,150],[387,145],[395,155],[402,187],[408,210],[418,205],[430,216],[440,206],[450,213],[465,198],[473,207],[480,230],[490,242],[498,238],[504,224],[510,227],[522,238],[533,280],[543,312],[549,323],[559,310],[569,297],[580,300],[592,309],[608,289],[625,297],[640,269],[655,280],[666,297],[684,270],[693,287],[702,309],[714,307],[724,330],[736,383],[749,395],[765,400],[777,363],[785,361],[798,380],[814,432],[821,438],[830,432],[840,447],[855,477],[865,470],[879,493],[893,517],[906,492],[922,470],[940,468],[961,442],[973,450],[983,473],[993,477],[1004,463],[1018,459],[1028,467],[1038,483],[1049,465],[1061,464],[1075,451],[1087,460],[1095,462],[1105,489],[1121,474],[1131,483],[1142,508],[1159,538],[1177,544],[1191,527],[1200,540],[1211,573],[1218,584],[1225,577],[1237,582],[1250,574],[1273,565],[1287,573],[1305,573],[1316,556],[1329,556],[1337,550],[1352,564],[1361,565],[1371,587],[1379,600],[1389,598],[1404,590],[1420,573],[1429,567],[1439,545],[1452,533],[1462,537],[1477,528],[1489,542],[1504,554],[1516,555],[1530,542],[1545,550]];

const lower = [[5,327],[17,320],[23,307],[30,297],[40,303],[53,297],[63,306],[80,300],[93,304],[102,303],[113,313],[127,312],[143,320],[160,330],[167,323],[178,302],[197,303],[207,297],[217,277],[227,270],[242,240],[257,257],[265,245],[273,242],[285,225],[293,237],[303,250],[320,235],[332,213],[347,217],[358,228],[367,250],[380,287],[394,311],[408,273],[418,285],[433,297],[449,307],[469,350],[485,333],[494,342],[504,375],[514,377],[522,388],[535,363],[543,335],[549,327],[567,347],[592,326],[598,338],[608,352],[636,397],[642,405],[661,413],[665,413],[677,457],[687,480],[695,475],[712,500],[722,504],[734,475],[740,467],[757,472],[767,483],[781,543],[798,555],[814,532],[834,554],[853,533],[867,548],[881,532],[893,520],[912,538],[932,547],[942,538],[957,546],[971,530],[983,493],[998,502],[1018,522],[1034,505],[1048,532],[1062,542],[1077,573],[1095,586],[1105,573],[1121,605],[1130,612],[1146,602],[1161,589],[1177,593],[1184,610],[1193,624],[1205,618],[1212,595],[1221,584],[1237,583],[1250,590],[1273,596],[1286,583],[1305,583],[1316,607],[1332,618],[1343,631],[1361,630],[1371,620],[1379,598],[1396,617],[1418,625],[1445,640],[1461,627],[1466,614],[1477,615],[1495,590],[1516,569],[1532,578],[1545,565]];

const middle = [[5,297],[20,290],[43,288],[73,292],[93,293],[113,290],[143,280],[167,270],[200,250],[227,233],[257,223],[287,218],[320,207],[347,207],[367,212],[383,222],[400,237],[430,252],[460,267],[498,293],[539,324],[555,324],[588,317],[612,320],[640,333],[671,360],[700,388],[734,425],[769,442],[806,477],[846,500],[879,516],[904,516],[928,510],[953,500],[981,485],[998,485],[1036,495],[1062,503],[1107,530],[1143,555],[1179,568],[1207,583],[1261,581],[1304,580],[1339,592],[1375,603],[1402,603],[1439,593],[1475,573],[1511,563],[1545,558]];

function drawMain() {
  const ctx = setup('mainChart');
  const bars = [];
  bodies.forEach(b => {
    const i = Math.round((b[0] - 6) / 4);
    bars[i] = { top: b[1], bot: b[2], up: b[3] === 1 };
  });
  // bars not read off are filled from their neighbours
  for (let i = 0; i < 386; i++) {
    if (bars[i]) continue;
    let a = i - 1, b = i + 1;
    while (!bars[b] && b < 386) b++;
    const top = (bars[a].top + bars[b].top) / 2, bot = (bars[a].bot + bars[b].bot) / 2;
    bars[i] = { top: top, bot: Math.min(bot, top + 8), up: rnd() > 0.5 };
  }
  bars.forEach((b, i) => {
    const x = 6 + i * 4;
    let hi = b.top - 2 - Math.floor(rnd() * 9);
    let lo = b.bot + 2 + Math.floor(rnd() * 9);
    longWicks.forEach(w => {
      if (Math.abs(w[0] - x) <= 1) {
        if (w[1]) hi = w[1];
        if (w[2]) lo = w[2];
      }
    });
    ctx.fillStyle = b.up ? '#3cb371' : '#ff0000';
    ctx.fillRect(x, hi, 1, lo - hi);
    ctx.fillRect(x - 1, b.top, 3, Math.max(b.bot - b.top, 1));
  });

  ctx.fillStyle = '#fff';
  polyline(ctx, upper, smoothAt, 1);
  polyline(ctx, lower, smoothAt, 1);
  polyline(ctx, middle, smoothAt, 1);
  // dashed average runs a little ahead of the middle line
  for (let x = 5; x < 1545; x += 6) {
    line(ctx, x, smoothAt(middle, x + 12), x + 2, smoothAt(middle, x + 14), 1);
  }
}

// blue line of the scalper, the red one is its mirror image on the zero line
const blueA = [[15,178],[30,172],[52,215],[65,213],[88,193],[112,238],[140,243],[150,263],[180,240],[208,262],[232,228],[258,210],[290,215],[305,200],[325,197],[340,183],[358,180],[380,152],[420,178],[450,165],[480,147],[510,167],[530,170],[535,190],[545,170],[560,210],[575,210],[585,232],[605,187],[630,198],[650,228],[660,200],[690,243],[730,187],[760,210],[778,205],[800,258],[820,272],[840,252],[860,282],[880,280],[900,335],[915,368],[935,400],[960,385],[985,343],[1020,360],[1045,335],[1065,385],[1080,380],[1100,385],[1140,423],[1165,345],[1192,345],[1220,405],[1240,370],[1270,418],[1290,352],[1305,335],[1330,305],[1345,305],[1375,258],[1400,288],[1415,265],[1440,310],[1458,340],[1480,345],[1495,358],[1520,340],[1545,405],[1567,430]].map(([x, y]) => [x / 2.45, 700 + y / 3]);
const redB = [[0,245],[20,245],[52,290],[65,240],[85,210],[110,185],[135,220],[150,182],[175,180],[180,190],[200,190],[220,258],[240,258],[250,245],[260,265],[270,245],[295,250],[325,170],[345,185],[358,155],[385,182],[400,185],[415,225],[435,190],[455,182],[475,190],[505,232],[535,205],[555,207],[570,232],[600,268],[630,242],[652,300],[680,302],[695,327],[725,315],[745,330],[770,357],[805,340],[825,305],[850,320],[860,285],[895,270],[925,255],[960,303],[975,255],[1010,252],[1055,205],[1085,225],[1100,188],[1125,233],[1150,200],[1185,187],[1200,210],[1235,210],[1250,235],[1285,245],[1300,255],[1335,197],[1375,215],[1390,285],[1415,292],[1450,275],[1480,298],[1510,275],[1525,315],[1568,270]].map(([x, y]) => [640 + x / 2.45, 700 + y / 3]);
const redC = [[1298,784],[1306,788],[1314,779],[1322,781],[1329,774],[1337,778],[1345,770],[1353,771],[1362,778],[1370,775],[1378,784],[1386,789],[1394,787],[1402,796],[1410,799],[1418,805],[1427,808],[1435,806],[1445,812],[1454,809],[1462,811],[1476,808],[1484,804],[1492,806],[1500,802],[1510,806],[1518,802],[1525,805],[1536,800],[1546,801]];
const ZERO = 811.2;

function drawScalper() {
  const ctx = setup('scalperChart');
  ctx.fillStyle = '#ffff00';
  ctx.fillRect(5, 811, 1868, 1);
  const mirror = k => [k[0], 2 * ZERO - k[1]];
  const blue = blueA.concat(redB.map(mirror), redC.map(mirror));
  const red = blue.map(mirror);
  ctx.fillStyle = '#0000ff';
  polyline(ctx, blue, lerpAt, 2);
  ctx.fillStyle = '#ff0000';
  polyline(ctx, red, lerpAt, 2);
}

const trendUp = [[5,935],[14,935],[15,940],[41,940],[82,940],[122,935],[155,930],[171,932],[196,928],[216,932],[231,935],[245,932],[261,935],[286,935],[298,933],[318,933],[335,941],[359,940],[375,920],[384,923],[394,920],[402,933],[412,929],[422,932],[437,922],[447,925],[467,910],[478,919],[498,909],[508,912],[519,905],[539,925],[555,930],[565,938],[580,933],[600,922],[620,922],[640,905],[654,902],[662,907],[673,895],[685,889],[699,901],[707,894],[718,897],[734,917],[762,921],[775,904],[789,906],[807,915],[816,925],[826,917],[836,921],[848,930],[862,925],[885,942],[895,936],[901,942],[922,938],[954,933],[987,942],[999,935],[1015,933],[1034,942],[1050,930],[1069,921],[1091,917],[1105,925],[1122,913],[1138,923],[1154,930],[1171,930],[1187,922],[1205,933],[1211,942],[1232,940],[1280,942],[1304,938],[1322,932],[1340,925],[1360,925],[1380,928],[1408,936],[1426,940],[1445,937],[1470,935],[1490,938],[1510,939],[1525,936],[1546,940]];
const trendDown = [[5,953],[14,953],[18,943],[41,940],[82,941],[98,947],[122,955],[143,960],[157,967],[176,962],[200,969],[216,963],[233,953],[249,961],[265,957],[282,947],[300,960],[320,957],[335,943],[347,948],[359,943],[382,954],[398,945],[420,948],[433,945],[465,958],[482,952],[500,960],[516,962],[533,950],[563,943],[580,948],[604,952],[640,957],[652,958],[660,957],[683,970],[693,962],[701,967],[720,963],[732,955],[758,953],[775,962],[803,955],[822,953],[848,947],[873,947],[887,942],[909,945],[930,952],[956,958],[979,947],[989,948],[999,942],[1015,947],[1032,942],[1048,948],[1073,953],[1089,957],[1101,948],[1118,956],[1154,947],[1171,947],[1187,952],[1203,948],[1211,942],[1252,943],[1280,942],[1310,946],[1340,951],[1375,947],[1410,945],[1430,952],[1445,955],[1465,950],[1490,949],[1510,946],[1525,949],[1546,943]];
// where the upper half of the histogram is blue and the lower half red
const blueUp = [[5, 365], [905, 987], [1415, 1547]];
const TREND_ZERO = 942;

function drawTrend() {
  const ctx = setup('trendChart');
  for (let x = 5; x <= 1546; x++) {
    const flip = blueUp.some(z => x >= z[0] && x < z[1]);
    const up = lerpAt(trendUp, x), down = lerpAt(trendDown, x);
    ctx.fillStyle = flip ? '#1e90ff' : '#dc143c';
    ctx.fillRect(x, up, 1, TREND_ZERO - up);
    ctx.fillStyle = flip ? '#dc143c' : '#1e90ff';
    ctx.fillRect(x, TREND_ZERO, 1, down - TREND_ZERO);
  }
  ctx.fillStyle = '#c0c0c0';
  polyline(ctx, trendUp, lerpAt, 3);
  polyline(ctx, trendDown, lerpAt, 3);
  for (let x = 5; x < 1873; x += 4) ctx.fillRect(x, TREND_ZERO, 2, 1);
  ctx.fillStyle = '#0000ff';
  ctx.fillRect(5, 936, 361, 3);
  ctx.fillStyle = '#ff0000';
  polyline(ctx, [[365,938],[440,935],[520,932],[640,931],[680,928],[1546,928]], lerpAt, 3);
}

drawMain();
drawScalper();
drawTrend();
```
